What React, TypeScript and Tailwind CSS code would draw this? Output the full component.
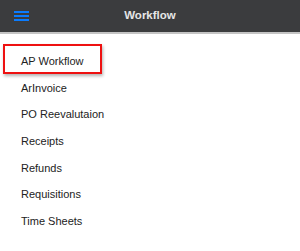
const ITEMS = [
  'AP Workflow',
  'ArInvoice',
  'PO Reevalutaion',
  'Receipts',
  'Refunds',
  'Requisitions',
  'Time Sheets',
]

export default function App() {
  return (
    <div className="w-[300px] h-[251px] bg-white font-['Liberation_Sans',Arial,sans-serif] overflow-hidden">
      <div className="relative h-[32px] bg-[#3b3c3e] flex items-center justify-center border-b-2 border-[#c4c4c4] box-content">
        <button className="absolute left-[14px] top-[11px] flex flex-col gap-[2px]">
          <span className="block w-[15px] h-[2px] bg-[#0a7cff]" />
          <span className="block w-[15px] h-[2px] bg-[#0a7cff]" />
          <span className="block w-[15px] h-[2px] bg-[#0a7cff]" />
        </button>
        <h1 className="text-[11.5px] font-bold text-[#e6e6e6]">Workflow</h1>
      </div>
      <ul className="pt-[14px]">
        {ITEMS.map((item, i) => (
          <li key={item} className="relative h-[26.67px] flex items-center pl-[21px] text-[11px] text-[#222]">
            {item}
            {i === 0 && (
              <span className="absolute left-[3px] top-[-4px] w-[99px] h-[30px] border-2 border-[#ee1111] shadow-[1px_2px_3px_rgba(0,0,0,0.3)]" />
            )}
          </li>
        ))}
      </ul>
    </div>
  )
}
